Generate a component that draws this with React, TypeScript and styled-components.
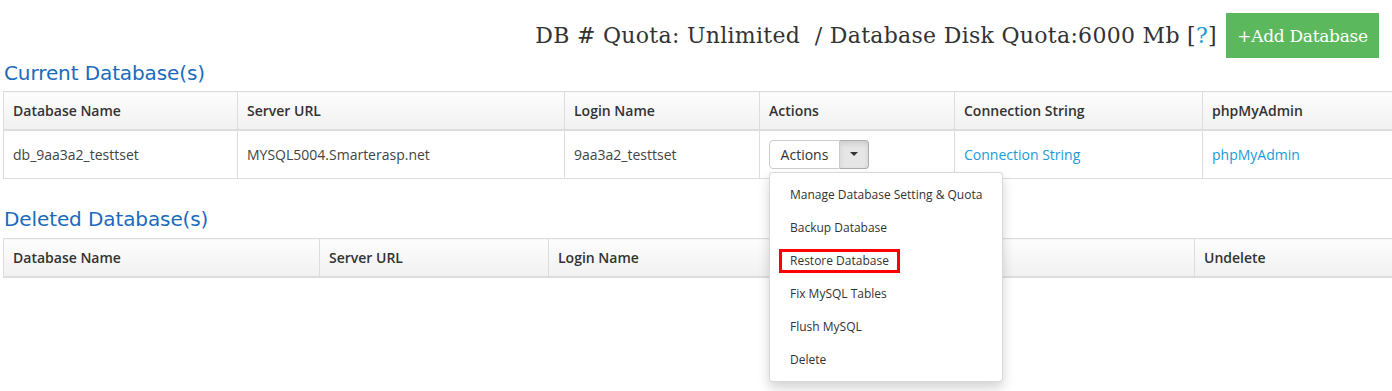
import React from "react";
import styled, { createGlobalStyle } from "styled-components";

const Global = createGlobalStyle`
  html, body { margin: 0; padding: 0; background: #fff; }
  body { font-family: "Open Sans", "DejaVu Sans", sans-serif; color: #333; }
  * { box-sizing: border-box; }
`;

const Page = styled.div`
  padding: 13px 0 0 3px;
  width: 1392px;
  height: 391px;
  overflow: hidden;
`;

const TopBar = styled.div`
  display: flex;
  justify-content: flex-end;
  align-items: center;
  gap: 9px;
  padding-right: 13px;
  height: 45px;
`;

const Quota = styled.div`
  font-family: "DejaVu Serif", serif;
  font-size: 22px;
  color: #333;
  white-space: pre;
  letter-spacing: 0.3px;
`;

const Help = styled.a`
  color: #1a9ad6;
  text-decoration: none;
`;

const AddButton = styled.button`
  width: 153px;
  height: 45px;
  border: none;
  background: #5cb85c;
  color: #fff;
  font-family: "DejaVu Serif", serif;
  font-size: 17px;
  letter-spacing: -0.3px;
  padding: 0;
`;

const SectionTitle = styled.h2<{ $top: number }>`
  margin: ${(p) => p.$top}px 0 0 1px;
  font-family: "DejaVu Sans", sans-serif;
  font-weight: normal;
  font-size: 20px;
  letter-spacing: -0.1px;
  color: #1a6bbd;
  line-height: 24px;
  height: 24px;
`;

const Table = styled.table<{ $top: number }>`
  margin-top: ${(p) => p.$top}px;
  width: 1400px;
  border-collapse: collapse;
  table-layout: fixed;
  font-size: 14px;
`;

const Th = styled.th`
  text-align: left;
  font-weight: 600;
  color: #333;
  height: 38px;
  padding: 0 9px;
  border: 1px solid #ddd;
  border-bottom: 2px solid #ddd;
  background: linear-gradient(#fdfdfd, #f1f1f1);
  white-space: nowrap;
`;

const Td = styled.td`
  height: 49px;
  padding: 0 9px;
  border: 1px solid #ddd;
  color: #444;
  white-space: nowrap;
`;

const Link = styled.a`
  color: #1a9ad6;
  text-decoration: none;
`;

const ActionsWrap = styled.div`
  position: relative;
  display: inline-flex;
`;

const ActBtn = styled.button`
  height: 29px;
  width: 71px;
  font-family: "Open Sans", sans-serif;
  font-size: 14px;
  color: #333;
  background: #fff;
  border: 1px solid #ccc;
  border-radius: 4px 0 0 4px;
  padding: 0;
`;

const CaretBtn = styled.button`
  height: 29px;
  width: 29px;
  background: #e6e6e6;
  border: 1px solid #adadad;
  border-left: none;
  border-radius: 0 4px 4px 0;
  box-shadow: inset 0 3px 5px rgba(0, 0, 0, 0.1);
  display: flex;
  align-items: center;
  justify-content: center;
  padding: 0;
`;

const Caret = styled.span`
  width: 0;
  height: 0;
  border-left: 4px solid transparent;
  border-right: 4px solid transparent;
  border-top: 4px solid #333;
`;

const Menu = styled.ul`
  position: absolute;
  top: 32px;
  left: 0;
  width: 234px;
  margin: 0;
  padding: 5px 0;
  list-style: none;
  background: #fff;
  border: 1px solid rgba(0, 0, 0, 0.15);
  border-radius: 4px;
  box-shadow: 0 6px 12px rgba(0, 0, 0, 0.175);
  z-index: 10;
`;

const MenuItem = styled.li`
  height: 33px;
  line-height: 33px;
  padding: 0 20px;
  font-size: 12px;
  color: #333;
  white-space: nowrap;
`;

const Highlight = styled.span`
  display: inline-block;
  margin-left: -11px;
  padding: 0 8px;
  line-height: 18px;
  border: 3px solid #f00;
`;

const current = ["Database Name", "Server URL", "Login Name", "Actions", "Connection String", "phpMyAdmin"];
const currentW = [234, 327, 195, 195, 248, 201];
const deleted = ["Database Name", "Server URL", "Login Name", "", "Undelete"];
const deletedW = [316, 229, 230, 416, 209];

const menu = [
  "Manage Database Setting & Quota",
  "Backup Database",
  "Restore Database",
  "Fix MySQL Tables",
  "Flush MySQL",
  "Delete",
];

export default function App() {
  return (
    <>
      <Global />
      <Page>
        <TopBar>
          <Quota>
            DB # Quota: Unlimited  / Database Disk Quota:6000 Mb [<Help>?</Help>]
          </Quota>
          <AddButton>+Add Database</AddButton>
        </TopBar>
        <SectionTitle $top={3}>Current Database(s)</SectionTitle>
        <Table $top={6}>
          <colgroup>
            {currentW.map((w, i) => (
              <col key={i} style={{ width: w }} />
            ))}
          </colgroup>
          <thead>
            <tr>
              {current.map((h) => (
                <Th key={h}>{h}</Th>
              ))}
            </tr>
          </thead>
          <tbody>
            <tr>
              <Td>db_9aa3a2_testtset</Td>
              <Td>MYSQL5004.Smarterasp.net</Td>
              <Td>9aa3a2_testtset</Td>
              <Td>
                <ActionsWrap>
                  <ActBtn>Actions</ActBtn>
                  <CaretBtn>
                    <Caret />
                  </CaretBtn>
                  <Menu>
                    {menu.map((m) => (
                      <MenuItem key={m}>
                        {m === "Restore Database" ? <Highlight>{m}</Highlight> : m}
                      </MenuItem>
                    ))}
                  </Menu>
                </ActionsWrap>
              </Td>
              <Td>
                <Link>Connection String</Link>
              </Td>
              <Td>
                <Link>phpMyAdmin</Link>
              </Td>
            </tr>
          </tbody>
        </Table>
        <SectionTitle $top={28}>Deleted Database(s)</SectionTitle>
        <Table $top={7}>
          <colgroup>
            {deletedW.map((w, i) => (
              <col key={i} style={{ width: w }} />
            ))}
          </colgroup>
          <thead>
            <tr>
              {deleted.map((h, i) => (
                <Th key={i}>{h}</Th>
              ))}
            </tr>
          </thead>
        </Table>
      </Page>
    </>
  );
}
